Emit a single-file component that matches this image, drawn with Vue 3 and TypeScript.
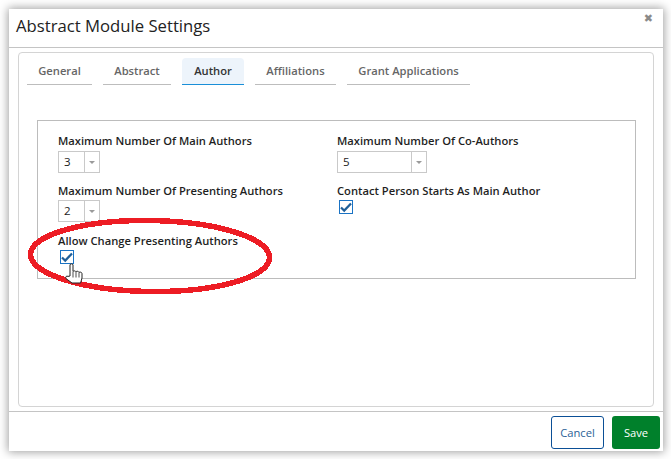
<script setup lang="ts">
const tabs = ['General', 'Abstract', 'Author', 'Affiliations', 'Grant Applications']
</script>

<template>
  <div class="stage">
    <div class="modal">
      <header class="head">
        <h1>Abstract Module Settings</h1>
        <span class="close">✖</span>
      </header>
      <main class="body">
        <section class="card">
          <nav class="tabs">
            <a v-for="t in tabs" :key="t" class="tab" :class="{ active: t === 'Author' }">{{ t }}</a>
          </nav>
          <div class="box">
            <div class="col">
              <div class="field">
                <label>Maximum Number Of Main Authors</label>
                <div class="select small"><span class="val">3</span><span class="arrow"><i></i></span></div>
              </div>
              <div class="field">
                <label>Maximum Number Of Presenting Authors</label>
                <div class="select small"><span class="val">2</span><span class="arrow"><i></i></span></div>
              </div>
              <div class="field">
                <label>Allow Change Presenting Authors</label>
                <div class="check">
                  <svg viewBox="0 0 12 12" width="12" height="12"><path d="M1 6.5 L4.2 9.6 L11 2.4" fill="none" stroke="#1f5f99" stroke-width="2.2" /></svg>
                </div>
              </div>
            </div>
            <div class="col">
              <div class="field">
                <label>Maximum Number Of Co-Authors</label>
                <div class="select wide"><span class="val">5</span><span class="arrow"><i></i></span></div>
              </div>
              <div class="field">
                <label>Contact Person Starts As Main Author</label>
                <div class="check">
                  <svg viewBox="0 0 12 12" width="12" height="12"><path d="M1 6.5 L4.2 9.6 L11 2.4" fill="none" stroke="#1f5f99" stroke-width="2.2" /></svg>
                </div>
              </div>
            </div>
          </div>
        </section>
      </main>
      <footer class="foot">
        <button class="btn cancel">Cancel</button>
        <button class="btn save">Save</button>
      </footer>
    </div>

    <svg class="ring" viewBox="0 0 671 459" width="671" height="459">
      <ellipse cx="150" cy="256" rx="119.5" ry="35.5" transform="rotate(0.8 150 256)" fill="none" stroke="#ed1c24" stroke-width="5.5" />
    </svg>
    <svg class="hand" viewBox="0 0 18 21" width="18" height="21">
      <path d="M5 13 V2 C5 .4 8 .4 8 2 V8.6 C8.6 7.6 10.4 7.6 11 8.8 C11.6 8 13.4 8 14 9.4 C14.6 8.8 16.8 9 17 10.6 V15 L15.6 20 H7 L1 15.6 C0 14 1.6 12.4 3 13.4 Z" fill="#fff" stroke="#222" stroke-width="1" />
      <path d="M8 9v5.5M11 9v5.5M14 9.5v5" stroke="#222" stroke-width=".8" fill="none" />
    </svg>
  </div>
</template>

<style>
html, body { margin: 0; background: #fff; }
</style>

<style scoped>
.stage {
  position: relative;
  width: 671px;
  height: 459px;
  padding: 9px 0 0 9px;
  box-sizing: border-box;
  overflow: hidden;
  font-family: "Open Sans", "Noto Sans", sans-serif;
  color: #1b1b1b;
}
.modal {
  width: 654px;
  height: 442px;
  background: #fff;
  box-shadow: 0 0 9px 1px rgba(0, 0, 0, .38);
  display: flex;
  flex-direction: column;
}
.head {
  height: 39px;
  flex: none;
  box-sizing: border-box;
  border-bottom: 1px solid #c4c4c4;
  display: flex;
  justify-content: space-between;
  padding: 0 10px 0 7px;
}
.head h1 {
  margin: 7px 0 0;
  font-size: 16.7px;
  line-height: 20px;
  font-weight: 500;
  color: #222;
}
.close {
  font-size: 11px;
  line-height: 11px;
  margin-top: 4px;
  color: #8a8a8a;
  font-family: "DejaVu Sans", sans-serif;
}
.body {
  flex: 1;
  background: #fff;
  padding: 4px 9px 4px 9px;
  display: flex;
  border-bottom: 1px solid #c4c4c4;
  min-height: 0;
}
.card {
  flex: 1;
  border: 1px solid #d4d4d4;
  border-radius: 4px;
  box-sizing: border-box;
  padding: 5px 17px 0 8px;
}
.tabs {
  display: grid;
  grid-template-columns: 65px 68px 62px 81px 123px;
  gap: 11px;
  height: 27px;
}
.tab {
  box-sizing: border-box;
  height: 27px;
  line-height: 25px;
  text-align: center;
  border-bottom: 1px solid #bdbdbd;
  font-size: 11.2px;
  font-weight: 600;
  color: #666;
}
.tab.active {
  background: #edf4fb;
  border-radius: 4px 4px 0 0;
  color: #333;
  border-bottom: 1px solid #1a8fd8;
}
.box {
  margin: 35px 0 0 10px;
  height: 159px;
  box-sizing: border-box;
  border: 1px solid #bcbcbc;
  display: grid;
  grid-template-columns: 279px 1fr;
  padding: 12px 20px 0;
}
.col {
  display: flex;
  flex-direction: column;
}
.field {
  height: 50px;
}
label {
  display: block;
  font-size: 11.2px;
  line-height: 16px;
  font-weight: 600;
  color: #1f1f1f;
  white-space: nowrap;
}
.select {
  margin-top: 2px;
  height: 22px;
  box-sizing: border-box;
  border: 1px solid #c9c9c9;
  display: flex;
  font-size: 11.5px;
  line-height: 20px;
  background: #fff;
}
.field + .field .select {
  margin-top: 1px;
}
.small { width: 42px; }
.wide { width: 90px; }
.val {
  flex: 1;
  padding-left: 5px;
}
.arrow {
  width: 14px;
  border-left: 1px solid #c9c9c9;
  display: flex;
  align-items: center;
  justify-content: center;
}
.arrow i {
  width: 0;
  height: 0;
  border-left: 3px solid transparent;
  border-right: 3px solid transparent;
  border-top: 3px solid #9a9a9a;
}
.check {
  margin: 1px 0 0 2px;
  width: 14px;
  height: 14px;
  box-sizing: border-box;
  border: 1px solid #1a73c4;
  background: #fff;
}
.check svg { display: block; }
.foot {
  height: 39px;
  flex: none;
  display: flex;
  justify-content: flex-end;
  gap: 8px;
  padding: 4px 3px 0 0;
  box-sizing: border-box;
}
.btn {
  height: 33px;
  border-radius: 3px;
  font-family: inherit;
  font-size: 11.2px;
  padding: 0;
}
.cancel {
  width: 53px;
  background: #fff;
  border: 1px solid #0b4f96;
  color: #2a5f96;
}
.save {
  width: 48px;
  background: #00802b;
  border: 0;
  color: #fff;
}
.ring {
  position: absolute;
  left: 0;
  top: 0;
  pointer-events: none;
  shape-rendering: crispEdges;
}
.hand {
  position: absolute;
  left: 65px;
  top: 263px;
}
</style>
